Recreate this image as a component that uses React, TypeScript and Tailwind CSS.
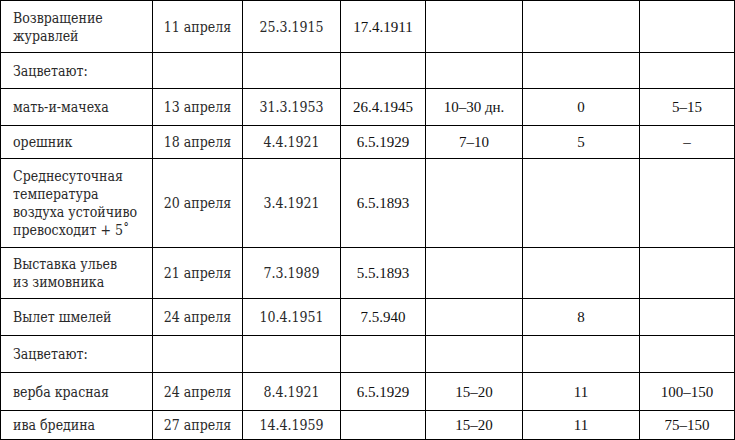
type Row = {
  name: string[];
  h: string;
  cells: string[];
};

const rows: Row[] = [
  { name: ["Возвращение", "журавлей"], h: "h-[52px]", cells: ["11 апреля", "25.3.1915", "17.4.1911", "", "", ""] },
  { name: ["Зацветают:"], h: "h-[36px]", cells: ["", "", "", "", "", ""] },
  { name: ["мать-и-мачеха"], h: "h-[37px]", cells: ["13 апреля", "31.3.1953", "26.4.1945", "10–30 дн.", "0", "5–15"] },
  { name: ["орешник"], h: "h-[33px]", cells: ["18 апреля", "4.4.1921", "6.5.1929", "7–10", "5", "–"] },
  {
    name: ["Среднесуточная", "температура", "воздуха устойчиво", "превосходит + 5˚"],
    h: "h-[89px]",
    cells: ["20 апреля", "3.4.1921", "6.5.1893", "", "", ""],
  },
  { name: ["Выставка ульев", "из зимовника"], h: "h-[51px]", cells: ["21 апреля", "7.3.1989", "5.5.1893", "", "", ""] },
  { name: ["Вылет шмелей"], h: "h-[37px]", cells: ["24 апреля", "10.4.1951", "7.5.940", "", "8", ""] },
  { name: ["Зацветают:"], h: "h-[37px]", cells: ["", "", "", "", "", ""] },
  { name: ["верба красная"], h: "h-[38px]", cells: ["24 апреля", "8.4.1921", "6.5.1929", "15–20", "11", "100–150"] },
  { name: ["ива бредина"], h: "h-[29px]", cells: ["27 апреля", "14.4.1959", "", "15–20", "11", "75–150"] },
];

// первые три колонки набраны книжной антиквой, остальные — таймсом
const bookFont = "[font-family:'DejaVu_Serif_Condensed','DejaVu_Serif',serif] text-[14px] text-[#2a2a2a]";
const timesFont = "[font-family:'Liberation_Serif',serif] text-[15px] text-[#111]";

export default function App() {
  return (
    <div className="h-[440px] w-[735px] overflow-hidden bg-white">
      <table className="w-[734px] table-fixed border-collapse leading-[18px]">
        <colgroup>
          <col className="w-[152px]" />
          <col className="w-[90px]" />
          <col className="w-[98px]" />
          <col className="w-[85px]" />
          <col className="w-[97px]" />
          <col className="w-[117px]" />
          <col className="w-[95px]" />
        </colgroup>
        <tbody>
          {rows.map((r, i) => (
            <tr key={i} className={r.h}>
              <td className={`border border-black pl-3 pr-1 align-middle ${bookFont}`}>
                {r.name.map((line, j) => (
                  <div key={j}>{line}</div>
                ))}
              </td>
              {r.cells.map((c, j) => (
                <td
                  key={j}
                  className={`border border-black px-1 text-center align-middle ${j < 2 ? bookFont : timesFont}`}
                >
                  {c}
                </td>
              ))}
            </tr>
          ))}
        </tbody>
      </table>
    </div>
  );
}
